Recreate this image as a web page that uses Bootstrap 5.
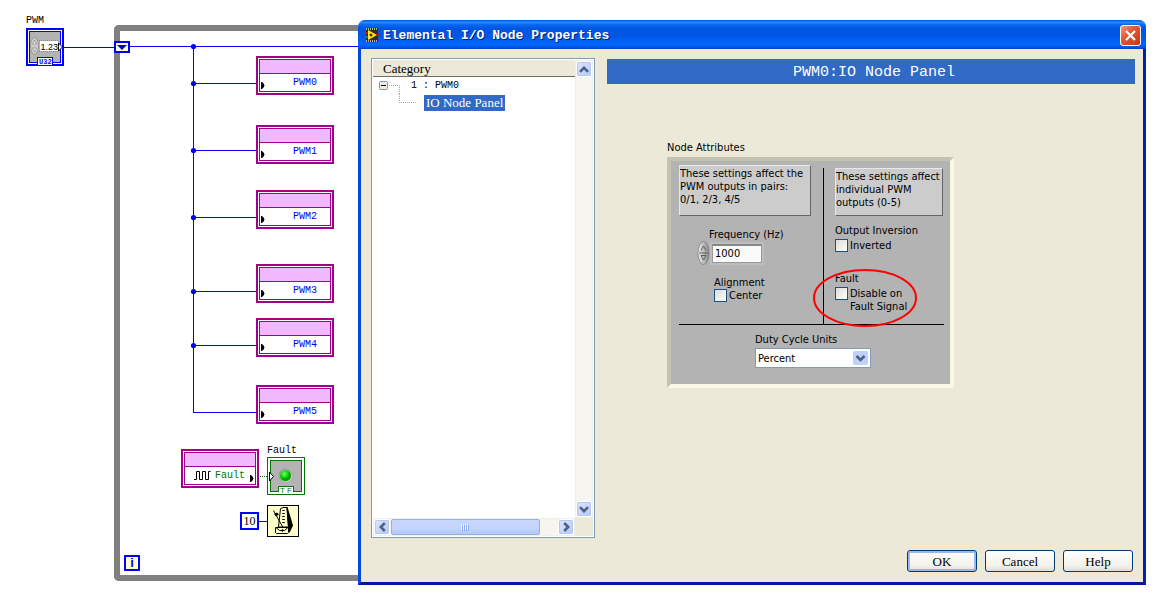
<!DOCTYPE html>
<html lang="en">
<head>
<meta charset="utf-8">
<meta name="viewport" content="width=device-width, initial-scale=1">
<title>Elemental I/O Node Properties</title>
<link href="https://cdn.jsdelivr.net/npm/bootstrap@5.3.0/dist/css/bootstrap.min.css" rel="stylesheet">
<style>
  :root { --mono: "Liberation Mono", monospace; --serif: "Liberation Serif", serif; --ui: "DejaVu Sans Condensed", "DejaVu Sans", sans-serif; }
  body { background: #fff; color: #000; font: 13px/16px var(--serif); }
  .desk { display: grid; grid-template-columns: 358px minmax(620px, 1fr); min-height: 100vh; }

  /* block diagram */
  .wires { position: absolute; left: 0; top: 0; width: 358px; height: 580px; }
  .loop-frame { position: absolute; left: 114px; right: 0; top: 25px; bottom: 30px; border: 6px solid #808080; border-right: 0; border-radius: 5px 0 0 5px; }
  .io-node { position: absolute; left: 256px; width: 78px; height: 39px; border: 2px solid #a0008c; padding: 1px; background: #fff; font: 10px/17px var(--mono); color: #00f; }
  .io-body { height: 100%; border: 1px solid #a0008c; }
  .io-head { height: 14px; background: #f0b8ff; border-bottom: 1px solid #a0008c; }
  .io-line { height: 17px; padding-left: 33px; position: relative; }
  .io-line svg { position: absolute; left: 1px; bottom: 2px; }
  .n0 { top: 56px } .n1 { top: 125px } .n2 { top: 190px } .n3 { top: 264px } .n4 { top: 318px } .n5 { top: 385px }
  .n-fault { left: 181px; top: 449px; color: #007800; }
  .n-fault .io-line { padding-left: 9px; display: flex; gap: 4px; align-items: center; }
  .n-fault .io-line .wave { position: static; }
  .n-fault .io-line .out-mark { left: auto; right: 1px; }
  .terminal { position: absolute; }
  .tag { position: absolute; font: 10px/12px var(--mono); }
  .tag-pwm { left: 26px; top: 15px } .tag-fault { left: 267px; top: 445px }
  .t-pwm { left: 26px; top: 28px } .t-shift { left: 114px; top: 41px } .t-led { left: 267px; top: 457px }
  .t-wait { left: 267px; top: 505px }
  .const { position: absolute; border: 2px solid #00f; text-align: center; }
  .c-ten { left: 240px; top: 512px; width: 19px; height: 18px; font: 12px/15px var(--serif); background: #fff; }
  .c-iter { left: 124px; top: 555px; width: 16px; height: 16px; font: bold 13px/12px "Liberation Sans", sans-serif; color: #00f; background: #ffc; }

  /* dialog window */
  .xp-window { margin: 20px 24px 26px 0; border-radius: 8px 8px 0 0; min-height: 565px; position: relative; background: #ece9d8; border: solid; border-width: 0 3px 3px; border-color: #0040d8 #0020b0 #0018a0 #0048e0; }
  .xp-title { height: 29px; margin: 0 -3px; padding: 0 5px 0 7px; border-radius: 7px 7px 0 0; color: #fff; background: linear-gradient(#0050d8 0, #2a8cff 8%, #0868f0 16%, #0054e0 30%, #0058e8 60%, #0068ff 82%, #0060f0 90%, #0040c8 100%); }
  .xp-title h1 { font: bold 13px/29px var(--mono); text-shadow: 1px 1px #00207c; margin: 2px 0 0; }
  .xp-close { width: 21px; height: 21px; margin-top: 1px; padding: 0; border: 1px solid #fff; border-radius: 3px; background: linear-gradient(135deg, #f09880, #e05838 40%, #c83810); display: flex; }
  .xp-body { padding: 9px 8px 10px 10px; gap: 12px; }
  .tree { width: 224px; margin-bottom: 34px; border: 1px solid #7f9db9; padding: 1px; background: #fff; display: grid; grid-template: 1fr 18px / 1fr 18px; }
  .tree-head { height: 17px; padding-left: 10px; line-height: 18px; background: #ece9d8; border-bottom: 1px solid #716f64; }
  .tree-row { height: 17px; display: flex; align-items: center; }
  .tree-row .picked { background: #316ac5; color: #fff; padding: 0 2px; }
  .mono10 { font: 10px/17px var(--mono); }
  .bar { background: #f6f5f0; display: flex; justify-content: space-between; border: 1px solid #f0efe8; }
  .bar-v { flex-direction: column; }
  .bar-corner { background: #ece9d8; }
  .bar button { width: 16px; height: 16px; border: 1px solid #fff; border-radius: 3px; outline: 1px solid #b8c8f0; outline-offset: -2px; padding: 0; background: linear-gradient(135deg, #dce6ff, #b4c8f8); display: flex; align-items: center; justify-content: center; }
  .thumb { width: 149px; border: 1px solid #98b0e0; border-radius: 2px; background: linear-gradient(#c8d6fb, #c4d4fc 60%, #b0c8f8); display: flex; align-items: center; justify-content: center; margin: 0 auto 0 1px; }
  .pane-head { height: 25px; margin: 1px 0 0; background: #316ac5; color: #fff; text-align: center; padding-left: 6px; font: 15px/27px var(--mono); }
  .attrs { font: 11px/13px var(--ui); margin: 57px 0 0 60px; width: 287px; }
  .attrs legend { font: inherit; margin: 0 0 3px; float: none; }
  .well { background: #b3b3b3; border: 4px solid; border-color: #c5c1ae #faf7e4 #faf7e4 #c5c1ae; height: 231px; padding: 4px 6px 0 8px; }
  .note { background: #ccc; border: 1px solid; border-color: #e8e8e8 #666 #666 #e8e8e8; padding: 1px 0 0; white-space: nowrap; margin: 0; }
  .note-a { width: 132px; height: 51px; } .note-b { width: 108px; height: 48px; margin-top: 3px; }
  .rule-v { width: 1px; background: #000; margin: 3px 11px 0 12px; }
  .rule-h { height: 1px; background: #000; }
  .upper { height: 159px; }
  .freq-group { margin: 12px 0 0 18px; }
  .freq-group label { padding-left: 12px; display: block; }
  .freq-line { gap: 2px; }
  .align-group { margin: 11px 0 0 35px; }
  .check-line, .align-group label { gap: 2px; }
  .check-line { margin-top: 2px; }
  .num { width: 50px; height: 19px; border: 1px solid #999; border-top: 2px solid #888; padding: 0 2px; background: #fafafa; font: inherit; outline: 2px solid #bdbdbd; border-radius: 0; }
  .tick { appearance: none; flex: none; width: 13px; height: 13px; margin: 0; border: 1px solid #1c5180; background: linear-gradient(135deg, #dcdcd7, #fff); }
  .fault-group { margin-top: 20px; position: relative; }
  .fault-group .ring { position: absolute; left: -23px; top: -4px; pointer-events: none; }
  .units { padding: 8px 0 0 76px; }
  .units label { display: block; }
  .picker { width: 116px; height: 20px; border: 1px solid #7f9db9; padding: 0 7px 0 2px; margin-top: 2px; appearance: none; background: #fff; font: inherit; color: #000; display: block; }
  .pick-wrap { width: 116px; position: relative; }
  .pick-wrap svg { position: absolute; right: 3px; top: 3px; pointer-events: none; }
  .foot { margin-right: 2px; }
  .xp-btn { width: 70px; height: 22px; padding: 0; border: 1px solid #003c74; border-radius: 3px; color: #000; font: 13px/19px var(--serif); background: linear-gradient(#fff, #f2f1ea 75%, #dedbd0); }
  .xp-btn.main { box-shadow: inset 0 0 0 2px #98b8ee; }
</style>
</head>
<body>
<svg width="0" height="0" class="position-absolute"><defs>
  <symbol id="inMark" viewBox="0 0 4 7"><path d="M0 0h1l2 2v1h.5v1H3v1L1 7H0z" fill="#000"/></symbol>
  <symbol id="chev" viewBox="0 0 10 7"><path d="M1 1.2 5 5.2 9 1.2" fill="none" stroke="#4d6185" stroke-width="2.6"/></symbol>
</defs></svg>
<main class="desk">
  <section class="position-relative" aria-label="Block diagram">
    <div class="loop-frame"></div>
    <svg class="wires" viewBox="0 0 358 580" fill="none" stroke="#00f" shape-rendering="crispEdges">
      <path d="M64 47.500h52M128 46.500h230M193.500 46v366M193 83.500h63M193 150.500h63M193 217.500h63M193 291.500h63M193 345.500h63M193 412.500h63M258 521.500h9"/>
      <path d="M260 476.500h8" stroke="#007800" stroke-dasharray="1 1"/>
      <g fill="#00f" stroke="none" shape-rendering="auto"><circle cx="193.500" cy="46.500" r="2.600"/><circle cx="193.500" cy="83.500" r="2.600"/><circle cx="193.500" cy="150.500" r="2.600"/><circle cx="193.500" cy="217.500" r="2.600"/><circle cx="193.500" cy="291.500" r="2.600"/><circle cx="193.500" cy="345.500" r="2.600"/></g>
    </svg>

    <span class="tag tag-pwm">PWM</span>
    <svg class="terminal t-pwm" width="38" height="38">
      <rect x="1" y="1" width="36" height="36" fill="#fff" stroke="#00f" stroke-width="2"/>
      <rect x="3.500" y="3.500" width="31" height="31" fill="#b3b3b3" stroke="#00f"/>
      <ellipse cx="8.500" cy="18" rx="4" ry="8.500" fill="#ccc" stroke="#999"/><path d="M6.500 16 8.500 12l2 4zM6.500 20l2 4 2-4z" fill="#eee" stroke="#888" stroke-width=".7"/>
      <rect x="14" y="13" width="18" height="10" fill="#fff"/><path d="M13 12.500h20M13 23.500h20" stroke="#888" stroke-dasharray="1 1"/>
      <text x="14.500" y="22" font-family="Liberation Sans, sans-serif" font-size="9">1.23</text>
      <path d="M32.500 15v8l4-4z" fill="#fff" stroke="#000"/>
      <rect x="11.500" y="29.500" width="15" height="8" fill="#fff" stroke="#00f"/>
      <text x="13" y="36" font-family="Liberation Mono, monospace" font-size="7" font-weight="bold" fill="#00f">U32</text>
    </svg>
    <svg class="terminal t-shift" width="16" height="12"><rect x="1" y="1" width="14" height="10" fill="#ffc" stroke="#00f" stroke-width="2"/><path d="M3 4h10L8 9z" fill="#0000e0"/></svg>

    <div class="io-node n0"><div class="io-body"><div class="io-head"></div><div class="io-line"><svg width="4" height="7"><use href="#inMark"/></svg>PWM0</div></div></div>
    <div class="io-node n1"><div class="io-body"><div class="io-head"></div><div class="io-line"><svg width="4" height="7"><use href="#inMark"/></svg>PWM1</div></div></div>
    <div class="io-node n2"><div class="io-body"><div class="io-head"></div><div class="io-line"><svg width="4" height="7"><use href="#inMark"/></svg>PWM2</div></div></div>
    <div class="io-node n3"><div class="io-body"><div class="io-head"></div><div class="io-line"><svg width="4" height="7"><use href="#inMark"/></svg>PWM3</div></div></div>
    <div class="io-node n4"><div class="io-body"><div class="io-head"></div><div class="io-line"><svg width="4" height="7"><use href="#inMark"/></svg>PWM4</div></div></div>
    <div class="io-node n5"><div class="io-body"><div class="io-head"></div><div class="io-line"><svg width="4" height="7"><use href="#inMark"/></svg>PWM5</div></div></div>
    <div class="io-node n-fault"><div class="io-body"><div class="io-head"></div><div class="io-line">
      <svg class="wave" width="17" height="9"><path d="M0 8.500h2.500v-8h3v8h3v-8h3v8h3v-8h2" fill="none" stroke="#000"/></svg>Fault<svg class="out-mark" width="4" height="7"><use href="#inMark"/></svg></div></div></div>

    <span class="tag tag-fault">Fault</span>
    <svg class="terminal t-led" width="38" height="38">
      <defs><radialGradient id="led" cx=".4" cy=".35"><stop offset="0" stop-color="#70ff60"/><stop offset=".6" stop-color="#18dc18"/><stop offset="1" stop-color="#00a000"/></radialGradient></defs>
      <rect x=".5" y=".5" width="37" height="37" fill="#fff" stroke="#007800"/>
      <rect x="3.500" y="3.500" width="31" height="31" fill="#b3b3b3" stroke="#007800"/>
      <circle cx="18.500" cy="18.500" r="7" fill="#999"/><circle cx="19" cy="19" r="6.500" fill="#c0c0c0"/><circle cx="18.500" cy="18.500" r="5.500" fill="url(#led)"/>
      <path d="M2.500 15v9l4-4.500z" fill="#fff" stroke="#000"/>
      <path d="M11.500 35v-5.500h15v5.500" fill="#fff" stroke="#007800"/>
      <text x="13" y="36" font-family="Liberation Sans, sans-serif" font-size="8" fill="#007800">T F</text>
    </svg>
    <div class="const c-ten">10</div>
    <svg class="terminal t-wait" width="32" height="32">
      <rect x=".5" y=".5" width="31" height="31" fill="#ffc" stroke="#000"/>
      <path d="M13.500 3.500 16 2.500h4L21.500 22h-10z" fill="#ffc" stroke="#000"/>
      <path d="M18 2h2.500L26 20.500 22.500 28 21 22 19.500 3z" fill="#000"/>
      <path d="M8.500 22.500h13v5l-1 1h-11l-1-1zM9 22.500l3.500 3h5l3.500-3M6.500 5.500l9.500 17" fill="none" stroke="#000"/>
      <path d="M16.500 5v13" stroke="#000" stroke-width="2.500" stroke-dasharray="1 2"/>
      <path d="m7 9 3-1.500 2 2-3 2zM14 25.500l1.500-1.500 1.500 1.500-1.500 1.500z" fill="#000"/>
    </svg>
    <div class="const c-iter">i</div>
  </section>

  <section class="xp-window d-flex flex-column" role="dialog" aria-labelledby="dlgTitle">
    <header class="xp-title d-flex align-items-center">
      <svg class="me-1" width="14" height="14"><path d="M1 0h12v14H1z" fill="#303020"/><path d="M1 1h12M1 13h12" stroke="#b0b090" stroke-width="2" stroke-dasharray="1 1"/><path d="M3 2v10l9-5z" fill="#ffe820"/><path d="M0 5h3M11 7h3" stroke="#f00" stroke-width="1.500"/><path d="M0 9h3" stroke="#08f" stroke-width="1.500"/><path d="M4.500 7h3M6 5.500v3" stroke="#000"/></svg>
      <h1 id="dlgTitle" class="flex-grow-1">Elemental I/O Node Properties</h1>
      <button type="button" class="xp-close" aria-label="Close"><svg class="m-auto" width="13" height="13"><path d="m2 2 9 9M11 2l-9 9" stroke="#fff" stroke-width="2.200"/></svg></button>
    </header>
    <div class="xp-body d-flex flex-grow-1">
      <nav class="tree flex-shrink-0" aria-label="Category">
        <div>
          <div class="tree-head">Category</div>
          <div class="tree-row mono10">
            <svg class="flex-shrink-0" width="38" height="17"><rect x="6.500" y="4.500" width="8" height="8" rx="1" fill="#eeeae0" stroke="#7898b5"/><path d="M8 8.500h5" stroke="#000"/><path d="M16 8.500h10.500V17" fill="none" stroke="#aca899" stroke-dasharray="1 1"/></svg>
            <span>1 : PWM0</span>
          </div>
          <div class="tree-row">
            <svg class="flex-shrink-0" width="51" height="17"><path d="M26.500 0v8.500H44" fill="none" stroke="#aca899" stroke-dasharray="1 1"/></svg>
            <span class="picked">IO Node Panel</span>
          </div>
        </div>
        <div class="bar bar-v">
          <button type="button" aria-label="Scroll up"><svg width="10" height="7"><path d="M1 5.800 5 1.800 9 5.800" fill="none" stroke="#4d6185" stroke-width="2.600"/></svg></button>
          <button type="button" aria-label="Scroll down"><svg width="10" height="7"><use href="#chev"/></svg></button>
        </div>
        <div class="bar">
          <button type="button" aria-label="Scroll left"><svg width="7" height="10"><path d="M5.800 1 1.800 5 5.800 9" fill="none" stroke="#4d6185" stroke-width="2.600"/></svg></button>
          <div class="thumb"><svg width="9" height="7"><path d="M.5 0v6M2.500 0v6M4.500 0v6M6.500 0v6" stroke="#eef4fe"/><path d="M1.500 1v6M3.500 1v6M5.500 1v6M7.500 1v6" stroke="#8cb0f8"/></svg></div>
          <button type="button" aria-label="Scroll right"><svg width="7" height="10"><path d="M1.200 1 5.200 5 1.200 9" fill="none" stroke="#4d6185" stroke-width="2.600"/></svg></button>
        </div>
        <div class="bar-corner"></div>
      </nav>
      <div class="flex-grow-1 d-flex flex-column">
        <h2 class="pane-head">PWM0:IO Node Panel</h2>
        <fieldset class="attrs">
          <legend>Node Attributes</legend>
          <div class="well">
            <div class="upper d-flex">
              <div>
                <p class="note note-a">These settings affect the<br>PWM outputs in pairs:<br>0/1, 2/3, 4/5</p>
                <div class="freq-group">
                  <label for="freq">Frequency (Hz)</label>
                  <div class="d-flex align-items-center freq-line">
                    <svg class="flex-shrink-0" width="13" height="24"><defs><linearGradient id="kn"><stop offset="0" stop-color="#eee"/><stop offset="1" stop-color="#888"/></linearGradient></defs><ellipse cx="6.500" cy="12" rx="5.500" ry="11.500" fill="url(#kn)" stroke="#777" stroke-width=".7"/><path d="M4 9.500 6.500 5 9 9.500M4 14.500h5L6.500 19zM2 12h9" fill="none" stroke="#555" stroke-width=".9"/></svg>
                    <input id="freq" class="num" type="text" value="1000">
                  </div>
                </div>
                <div class="align-group">
                  <div>Alignment</div>
                  <label class="d-flex"><input class="tick" type="checkbox"><span>Center</span></label>
                </div>
              </div>
              <div class="rule-v"></div>
              <div>
                <p class="note note-b">These settings affect<br>individual PWM<br>outputs (0-5)</p>
                <div class="mt-2">Output Inversion</div>
                <label class="d-flex check-line"><input class="tick" type="checkbox"><span>Inverted</span></label>
                <div class="fault-group">
                  <div>Fault</div>
                  <label class="d-flex check-line"><input class="tick" type="checkbox"><span>Disable on<br>Fault Signal</span></label>
                  <svg class="ring" width="106" height="60"><ellipse cx="53" cy="30" rx="51" ry="28" fill="none" stroke="#f00" stroke-width="2"/></svg>
                </div>
              </div>
            </div>
            <div class="rule-h"></div>
            <div class="units">
              <label for="units">Duty Cycle Units</label>
              <div class="pick-wrap">
                <select id="units" class="picker"><option>Percent</option></select>
                <svg width="15" height="14"><rect width="15" height="14" rx="2" fill="#bed0fb"/><path d="M3.500 5 7.500 9 11.500 5" fill="none" stroke="#4d6185" stroke-width="2.600"/></svg>
              </div>
            </div>
          </div>
        </fieldset>
        <div class="d-flex justify-content-end gap-2 mt-auto foot">
          <button type="button" class="xp-btn main">OK</button>
          <button type="button" class="xp-btn">Cancel</button>
          <button type="button" class="xp-btn">Help</button>
        </div>
      </div>
    </div>
  </section>
</main>
<script src="https://cdn.jsdelivr.net/npm/bootstrap@5.3.0/dist/js/bootstrap.bundle.min.js"></script>
</body>
</html>
